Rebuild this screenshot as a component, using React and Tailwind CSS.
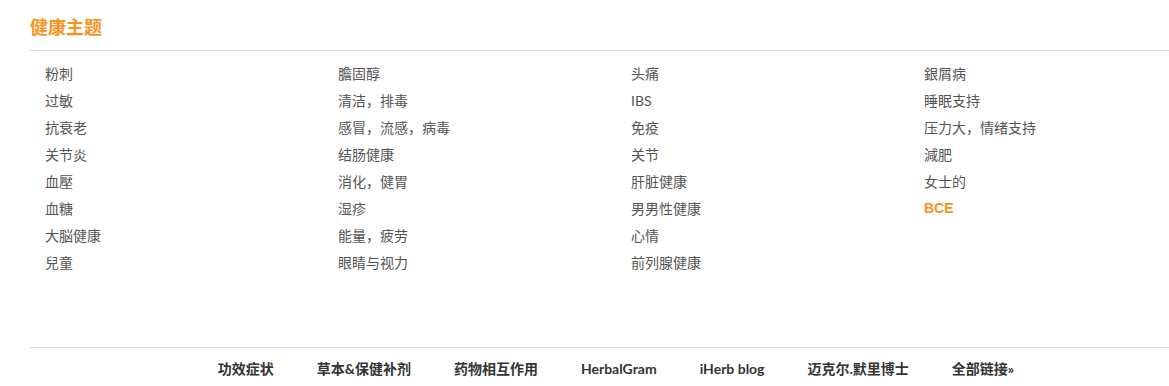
const columns = [
  ["粉刺", "过敏", "抗衰老", "关节炎", "血壓", "血糖", "大脳健康", "兒童"],
  ["膽固醇", "清洁，排毒", "感冒，流感，病毒", "结肠健康", "消化，健胃", "湿疹", "能量，疲劳", "眼睛与视力"],
  ["头痛", "IBS", "免疫", "关节", "肝脏健康", "男男性健康", "心情", "前列腺健康"],
  ["銀屑病", "睡眠支持", "压力大，情绪支持", "減肥", "女士的", "BCE"],
];

const footerLinks = ["功效症状", "草本&保健补剂", "药物相互作用", "HerbalGram", "iHerb blog", "迈克尔.默里博士", "全部链接»"];

const App = () => {
  return (
    <div className="w-[1169px] h-[386px] overflow-hidden bg-white font-['Lato','Noto_Sans_CJK_SC',sans-serif]">
      <div className="w-[1172px] ml-[30px]">
        <h2 className="h-[51px] pt-[16px] text-[18px] font-bold leading-[22px] text-[#f7941d] border-b border-[#dddddd] w-[1139px]">
          健康主题
        </h2>

        <div className="grid grid-cols-[293px_293px_293px_293px] pt-[9px] h-[296px]">
          {columns.map((col, i) => (
            <ul key={i} className="pl-[15px]">
              {col.map((item) => (
                <li
                  key={item}
                  className={
                    item === "BCE"
                      ? "h-[27px] leading-[27px] text-[14px] font-bold text-[#f7941d] font-['Liberation_Sans',sans-serif]"
                      : "h-[27px] leading-[27px] text-[14px] text-[#555555]"
                  }>
                  {item}
                </li>
              ))}
            </ul>
          ))}
        </div>

        <div className="border-t border-[#dddddd] w-[1139px]">
          <ul className="w-[1172px] flex justify-center gap-[43px] pt-[10px]">
            {footerLinks.map((link) => (
              <li key={link} className="text-[14px] font-bold leading-[22px] text-[#333333]">
                {link}
              </li>
            ))}
          </ul>
        </div>
      </div>
    </div>
  );
};

export default App;
